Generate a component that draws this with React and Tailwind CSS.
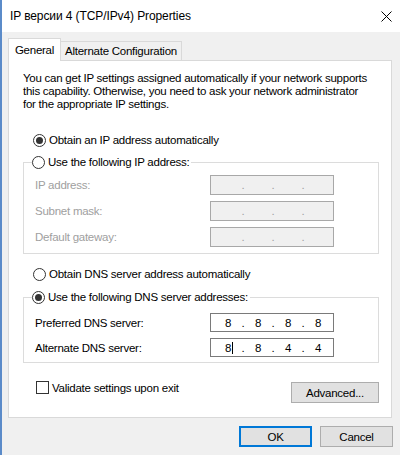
import React from "react";

function Radio({ checked }) {
  return (
    <span className="w-[13px] h-[13px] rounded-full border border-[#333333] bg-white flex items-center justify-center shrink-0">
      {checked && <span className="w-[7px] h-[7px] rounded-full bg-[#333333]" />}
    </span>
  );
}

function IpField({ values, disabled, cursor, h }) {
  const parts = values || ["", "", "", ""];
  return (
    <div
      className={
        "w-[124px] flex items-center pl-[2px] border " +
        h +
        " " +
        (disabled ? "bg-[#f0f0f0] border-[#a8a8a8] text-[#a0a0a0]" : "bg-white border-[#7a7a7a] text-black")
      }
    >
      {parts.map((p, i) => (
        <React.Fragment key={i}>
          <span className="w-[30px] flex justify-center relative">
            {p}
            {cursor && i === 0 && <span className="absolute left-[19px] top-[1px] w-px h-[12px] bg-black" />}
          </span>
          {i < 3 && <span className="w-0 flex justify-center">.</span>}
        </React.Fragment>
      ))}
    </div>
  );
}

function Button({ children, w, primary }) {
  return (
    <div
      className={
        "h-[21px] flex items-center justify-center bg-[#e1e1e1] " +
        w +
        " " +
        (primary ? "border-2 border-[#0078d7]" : "border border-[#adadad]")
      }
    >
      {children}
    </div>
  );
}

export default function App() {
  return (
    <div
      className="w-[400px] h-[455px] bg-[#f0f0f0] border-l-2 border-[#5b8bc9] flex flex-col text-black text-[11.5px] tracking-[-0.25px] leading-[14px] overflow-hidden"
      style={{ fontFamily: '"Liberation Sans", Arial, sans-serif' }}
    >
      {/* Title bar */}
      <div className="h-[32px] bg-white flex items-center justify-between pl-[8px] pr-[8px] shrink-0">
        <span className="text-[12px] tracking-[-0.1px]">IP версии 4 (TCP/IPv4) Properties</span>
        <svg width="11" height="11" viewBox="0 0 11 11">
          <path d="M0.5 0.5 L10.5 10.5 M10.5 0.5 L0.5 10.5" stroke="#000" strokeWidth="1" />
        </svg>
      </div>

      {/* Body */}
      <div className="flex flex-col pt-[6px] pl-[6px] pr-[8px]">
        {/* Tabs */}
        <div className="flex items-end h-[22px]">
          <div className="w-[53px] h-[23px] -mb-px bg-white border border-b-0 border-[#d9d9d9] flex items-center justify-center relative z-10 pb-[1px]">
            General
          </div>
          <div className="w-[121px] h-[19px] bg-[#f0f0f0] border border-l-0 border-b-0 border-[#d9d9d9] flex items-center justify-center">
            Alternate Configuration
          </div>
        </div>

        {/* Panel */}
        <div className="h-[358px] bg-white border border-[#d9d9d9] pl-[14px] pr-[12px] flex flex-col">
          <p className="mt-[11px] leading-[13px]">
            You can get IP settings assigned automatically if your network supports
            <br />
            this capability. Otherwise, you need to ask your network administrator
            <br />
            for the appropriate IP settings.
          </p>

          <div className="mt-[21px] h-[16px] flex items-center gap-[3px] ml-[10px]">
            <Radio checked />
            <span>Obtain an IP address automatically</span>
          </div>

          <fieldset className="mt-[6px] border border-[#dcdcdc] px-0 pb-[6px]">
            <legend className="ml-[8px] pr-[2px] h-[16px] flex items-center gap-[3px]">
              <Radio />
              <span>Use the following IP address:</span>
            </legend>
            <div className="mt-[5px] pl-[11px] pr-[44px] flex flex-col gap-[6px] text-[#a0a0a0]">
              <div className="flex items-center">
                <span className="w-[175px]">IP address:</span>
                <IpField disabled h="h-[20px]" />
              </div>
              <div className="flex items-center">
                <span className="w-[175px]">Subnet mask:</span>
                <IpField disabled h="h-[20px]" />
              </div>
              <div className="flex items-center">
                <span className="w-[175px]">Default gateway:</span>
                <IpField disabled h="h-[20px]" />
              </div>
            </div>
          </fieldset>

          <div className="mt-[12px] h-[16px] flex items-center gap-[3px] ml-[10px]">
            <Radio />
            <span>Obtain DNS server address automatically</span>
          </div>

          <fieldset className="mt-[7px] border border-[#dcdcdc] px-0 pb-[5px]">
            <legend className="ml-[8px] pr-[2px] h-[16px] flex items-center gap-[3px]">
              <Radio checked />
              <span>Use the following DNS server addresses:</span>
            </legend>
            <div className="mt-[8px] pl-[11px] pr-[44px] flex flex-col gap-[6px]">
              <div className="flex items-center">
                <span className="w-[175px]">Preferred DNS server:</span>
                <IpField values={["8", "8", "8", "8"]} h="h-[19px]" />
              </div>
              <div className="flex items-center">
                <span className="w-[175px]">Alternate DNS server:</span>
                <IpField values={["8", "8", "4", "4"]} cursor h="h-[19px]" />
              </div>
            </div>
          </fieldset>

          <div className="mt-[18px] flex items-start justify-between">
            <div className="flex items-center gap-[3px] ml-[13px] h-[13px]">
              <span className="w-[13px] h-[13px] border border-[#333333] bg-white shrink-0" />
              <span>Validate settings upon exit</span>
            </div>
            <div className="mt-[1px]">
              <Button w="w-[88px]">Advanced...</Button>
            </div>
          </div>
        </div>

        {/* Bottom buttons */}
        <div className="mt-[8px] flex justify-end gap-[8px] -mr-[1px]">
          <Button w="w-[73px]" primary>
            OK
          </Button>
          <Button w="w-[73px]">Cancel</Button>
        </div>
      </div>
    </div>
  );
}
